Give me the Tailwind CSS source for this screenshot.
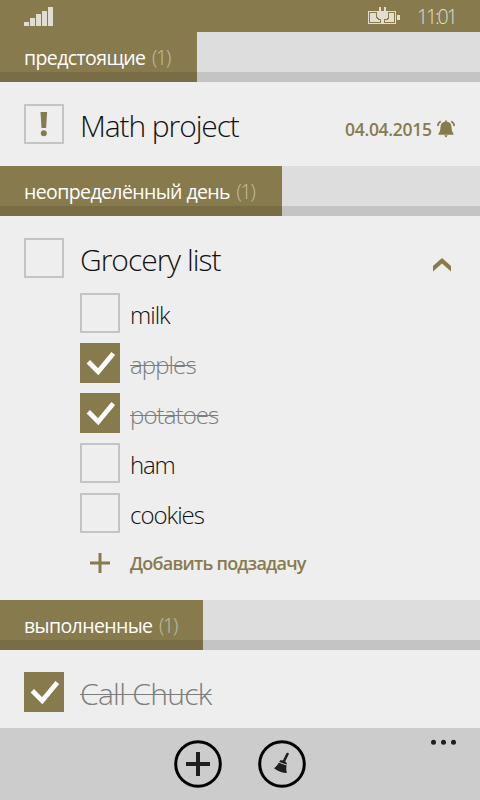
<!DOCTYPE html>
<html lang="ru">
<head>
<meta charset="utf-8">
<title>Задачи</title>
<script src="https://cdn.jsdelivr.net/npm/@tailwindcss/browser@4"></script>
</head>
<body class="w-[480px] h-[800px] overflow-hidden bg-[#eeeeee] flex flex-col font-['Open_Sans','Noto_Sans',sans-serif] text-[#111111] whitespace-nowrap">

<header class="h-8 shrink-0 bg-[#877b4e] flex items-start justify-between pl-6 pr-6 text-[#e1ddd0]">
  <svg class="mt-[7px]" width="29" height="19" viewBox="0 0 29 19" fill="currentColor" shape-rendering="crispEdges"><path d="M0 15h5v4H0zM6 11h5v8H6zM12 7h5v12h-5zM18 4h5v15h-5zM24 0h5v19h-5z"/></svg>
  <div class="flex items-start">
    <svg class="mt-[7px] mr-[17px]" width="32" height="18" viewBox="0 0 32 18" fill="currentColor" shape-rendering="crispEdges">
      <path d="M0 4h9v1H1v11h12v1H0zM19 4h9v13H16v-1h11V5h-8z"/>
      <path d="M2 6h6v5l2 2h2v2H2zM26 6h-5v5l-2 2h-2v2h9z"/>
      <path d="M11 0h2v4h3V0h2v4h2v6l-2 2h-2v5h-3v-5h-2l-2-2V4h2zM29 8h3v5h-3z"/>
    </svg>
    <span class="w-[39px] text-[19.5px] leading-[33px] font-light tracking-[-2.1px]">11:01</span>
  </div>
</header>

<div class="h-[50px] shrink-0 bg-[#dddddd] relative">
  <h2 class="h-full w-[197px] pl-6 bg-[#877b4e] text-white text-[19.5px] leading-[51px] font-normal tracking-[-0.6px]">предстоящие <span class="text-[#c3bda7] font-light ml-[2px] tracking-[-1.2px]">(1)</span></h2>
  <div class="absolute inset-x-0 bottom-0 h-[10px] bg-black/11"></div>
</div>

<section class="h-[84px] shrink-0 pt-[22px] px-6 flex">
  <div class="size-10 border-2 border-[#c4c4c4] flex justify-center">
    <svg width="36" height="36" viewBox="0 0 36 36" fill="#877b4e"><path d="M14.500 6h6.600l-1 16h-4.600z"/><circle cx="17.800" cy="27.200" r="3"/></svg>
  </div>
  <span class="ml-4 text-[30px] leading-[43px] font-light tracking-[-1.1px]">Math project</span>
  <div class="ml-auto flex items-start text-[#877b4e]">
    <span class="text-[17.5px] leading-[51px] font-semibold tracking-[-0.3px] w-[87px]">04.04.2015</span>
    <svg class="ml-[5px] mt-[16px] mr-[1px]" width="18" height="18" viewBox="0 0 18 18" fill="currentColor"><path d="M8.300 1.500V.3h1.400v1.200c3.400.5 4.600 2.500 4.800 5.500.1 3 .5 5 2 6.500v1.200h-15v-1.200C3 12 3.400 10 3.500 7c.2-3 1.400-5 4.800-5.500zM7.300 15.300h3.400L9.500 17.200h-1z"/><path d="M3.700 1.300C2 2.400 1 4 .8 6M14.300 1.300C16 2.400 17 4 17.200 6" fill="none" stroke="currentColor" stroke-width="1.700"/></svg>
  </div>
</section>

<div class="h-[50px] shrink-0 bg-[#dddddd] relative">
  <h2 class="h-full w-[282px] pl-6 bg-[#877b4e] text-white text-[19.5px] leading-[51px] font-normal tracking-[-0.6px]">неопределённый день <span class="text-[#c3bda7] font-light ml-[2px] tracking-[-1.2px]">(1)</span></h2>
  <div class="absolute inset-x-0 bottom-0 h-[10px] bg-black/11"></div>
</div>

<section class="h-[384px] shrink-0 pt-[22px] px-6">
  <div class="h-[55px] flex">
    <div class="size-10 border-2 border-[#c4c4c4]"></div>
    <span class="ml-4 text-[30px] leading-[43px] font-light tracking-[-1px]">Grocery list</span>
    <svg class="ml-auto mt-[20px] mr-[5px]" width="18" height="14" viewBox="0 0 18 14" fill="#877b4e"><path d="M9 0l9 8v5.500L9 5.400 0 13.500V8z"/></svg>
  </div>
  <ul class="pl-14 flex flex-col gap-[10px] text-[24px] leading-[43px] font-light">
    <li class="h-10 flex gap-[10px]"><div class="size-10 border-2 border-[#c4c4c4]"></div><span class="tracking-[-1px]">milk</span></li>
    <li class="h-10 flex gap-[10px]"><svg width="40" height="40" viewBox="0 0 40 40"><path fill="#877b4e" d="M0 0h40v40H0z"/><path d="M8.300 18.800l9.900 10L33.300 10.500" fill="none" stroke="#fff" stroke-width="4.800"/></svg><span class="tracking-[-0.9px] text-[#7d7d7d] line-through decoration-1">apples</span></li>
    <li class="h-10 flex gap-[10px]"><svg width="40" height="40" viewBox="0 0 40 40"><path fill="#877b4e" d="M0 0h40v40H0z"/><path d="M8.300 18.800l9.900 10L33.300 10.500" fill="none" stroke="#fff" stroke-width="4.800"/></svg><span class="tracking-[-0.9px] text-[#7d7d7d] line-through decoration-1">potatoes</span></li>
    <li class="h-10 flex gap-[10px]"><div class="size-10 border-2 border-[#c4c4c4]"></div><span class="tracking-[-1.2px]">ham</span></li>
    <li class="h-10 flex gap-[10px]"><div class="size-10 border-2 border-[#c4c4c4]"></div><span class="tracking-[-1px]">cookies</span></li>
  </ul>
  <div class="pl-14 mt-[10px] h-10 flex text-[#877b4e]">
    <svg width="40" height="40" viewBox="0 0 40 40" fill="currentColor"><path d="M10 18.500h8.500V10h3v8.500H30v3h-8.500V30h-3v-8.500H10z"/></svg>
    <span class="ml-[10px] text-[18px] leading-[41px] font-semibold tracking-[-0.75px]">Добавить подзадачу</span>
  </div>
</section>

<div class="h-[50px] shrink-0 bg-[#dddddd] relative">
  <h2 class="h-full w-[203px] pl-6 bg-[#877b4e] text-white text-[19.5px] leading-[51px] font-normal tracking-[-0.6px]">выполненные <span class="text-[#c3bda7] font-light ml-[2px] tracking-[-1.2px]">(1)</span></h2>
  <div class="absolute inset-x-0 bottom-0 h-[10px] bg-black/11"></div>
</div>

<section class="h-[78px] shrink-0 pt-[22px] px-6 flex">
  <svg width="40" height="40" viewBox="0 0 40 40"><path fill="#877b4e" d="M0 0h40v40H0z"/><path d="M8.300 18.800l9.900 10L33.300 10.500" fill="none" stroke="#fff" stroke-width="4.800"/></svg>
  <span class="ml-4 text-[30px] leading-[43px] font-light tracking-[-0.7px] text-[#7d7d7d] line-through decoration-1">Call Chuck</span>
</section>

<footer class="h-[72px] shrink-0 bg-[#cccccc] relative flex justify-center gap-9 pt-3">
  <svg width="48" height="48" viewBox="0 0 48 48"><circle cx="24" cy="24" r="22.300" fill="none" stroke="#000" stroke-width="3"/><path fill="#1f1f1f" d="M12 22h10V12h4v10h10v4H26v10h-4V26H12z"/></svg>
  <svg width="48" height="48" viewBox="0 0 48 48"><circle cx="24" cy="24" r="22.300" fill="none" stroke="#000" stroke-width="3"/><path d="M29.500 14l-4 8" stroke="#1f1f1f" stroke-width="2.600" stroke-linecap="round"/><path fill="#1f1f1f" d="M22.300 20.300c2.500-.5 5.500.6 6.500 3v1.200l-7.600-2.600zM20.700 22.800l8 2.800c-.7 2.500-.5 5 .2 7.400-4.500-.1-9.200-1.700-12.900-4.800 2-1.300 3.700-3.200 4.700-5.400z"/></svg>
  <svg class="absolute right-[23px] top-[11px]" width="26" height="6" viewBox="0 0 26 6" fill="#1f1f1f"><circle cx="2.500" cy="3.300" r="2.500"/><circle cx="12.500" cy="3.300" r="2.500"/><circle cx="22.500" cy="3.300" r="2.500"/></svg>
</footer>
</body>
</html>
